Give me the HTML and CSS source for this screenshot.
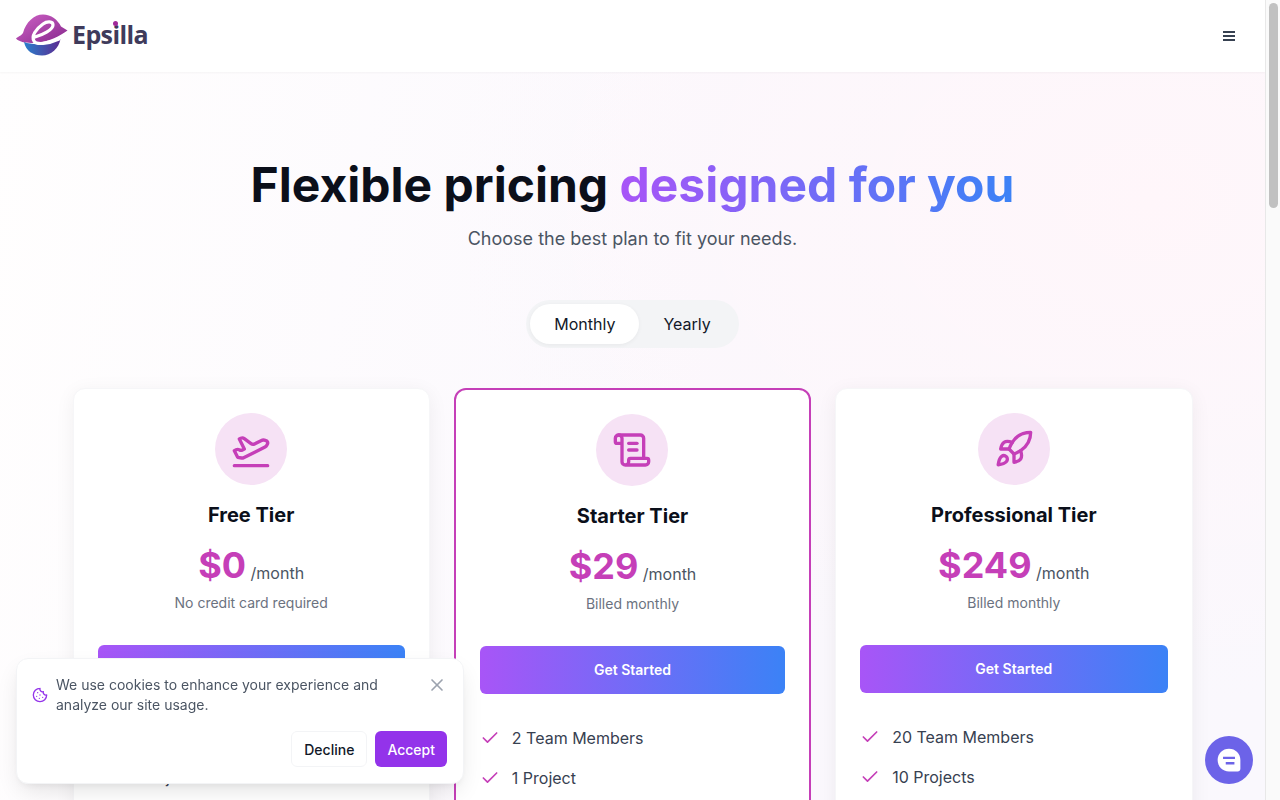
FILE: index.html
```html
<!DOCTYPE html>
<html lang="en">
<head>
    <meta charset="UTF-8">
    <meta name="viewport" content="width=device-width, initial-scale=1.0">
    <title>Epsilla Pricing</title>
    <link rel="stylesheet" href="styles.css">
</head>
<body>
    <div class="page">
        <header class="site-header">
            <a href="#" class="logo">
                <svg class="logo-mark" viewBox="0 0 54 44" width="54" height="44">
                    <defs>
                        <linearGradient id="domeGrad" x1="0" y1="0" x2="1" y2="1">
                            <stop offset="0" stop-color="#cf62c6"/>
                            <stop offset="1" stop-color="#86288c"/>
                        </linearGradient>
                        <linearGradient id="baseGrad" x1="0" y1="0" x2="1" y2="0">
                            <stop offset="0" stop-color="#2a7fcc"/>
                            <stop offset="1" stop-color="#5b2a91"/>
                        </linearGradient>
                    </defs>
                    <path fill="url(#domeGrad)" d="M0 24.500C1 23 5 22 7 19C10 8 18 0.500 27 0.500C35 0.500 42 6 45 12.500L51.500 16.500C44 22 33 27.500 22 28.500C14 29.500 4 29 0 24.500Z"/>
                    <path fill="url(#baseGrad)" d="M8 28C18 32 34 30 44.500 25C43 34 35 41.500 26 41.500C17 41.500 10 37 8 28Z"/>
                    <path fill="none" stroke="#fff" stroke-width="3.200" stroke-linecap="round" d="M19 23C26 21 37 16 37 11C37 7 31 7 27 10C20 15 15 22 18 27C20 31 32 30 43 25"/>
                </svg>
                <span class="logo-text">Eps<span class="logo-i">i</span>lla</span>
            </a>
            <button class="menu-btn" aria-label="Menu">
                <span></span><span></span><span></span>
            </button>
        </header>

        <main class="pricing">
            <h1>Flexible pricing <span class="grad-text">designed for you</span></h1>
            <p class="subtitle">Choose the best plan to fit your needs.</p>

            <div class="toggle">
                <button class="toggle-btn active">Monthly</button>
                <button class="toggle-btn">Yearly</button>
            </div>

            <div class="plans">
                <div class="plan">
                    <div class="plan-icon">
                        <svg class="icon-lg" viewBox="0 0 24 24"><path d="M2 22h20"/><path d="M6.360 17.400 4 17l-2-4 1.100-.550a2 2 0 0 1 1.800 0l.170.100a2 2 0 0 0 1.800 0L8 12 5 6l.900-.450a2 2 0 0 1 2.090.200l4.020 3a2 2 0 0 0 2.100.200l4.190-2.060a2.410 2.410 0 0 1 1.730-.170L21 7a1.400 1.400 0 0 1 .870 1.990l-.380.760c-.230.460-.600.840-1.070 1.080L7.580 17.200a2 2 0 0 1-1.220.180Z"/></svg>
                    </div>
                    <h3>Free Tier</h3>
                    <div class="price"><strong>$0</strong> <span>/month</span></div>
                    <p class="note">No credit card required</p>
                    <a href="#" class="start-btn">Get Started</a>
                    <ul class="features">
                        <li><svg class="check" viewBox="0 0 24 24"><path d="M20 6 9 17l-5-5"/></svg>1 Team Member</li>
                        <li><svg class="check" viewBox="0 0 24 24"><path d="M20 6 9 17l-5-5"/></svg>1 Project</li>
                    </ul>
                </div>

                <div class="plan featured">
                    <div class="plan-icon">
                        <svg class="icon-lg" viewBox="0 0 24 24"><path d="M15 12h-5"/><path d="M15 8h-5"/><path d="M19 17V5a2 2 0 0 0-2-2H4"/><path d="M8 21h12a2 2 0 0 0 2-2v-1a1 1 0 0 0-1-1H11a1 1 0 0 0-1 1v1a2 2 0 1 1-4 0V5a2 2 0 1 0-4 0v2a1 1 0 0 0 1 1h3"/></svg>
                    </div>
                    <h3>Starter Tier</h3>
                    <div class="price"><strong>$29</strong> <span>/month</span></div>
                    <p class="note">Billed monthly</p>
                    <a href="#" class="start-btn">Get Started</a>
                    <ul class="features">
                        <li><svg class="check" viewBox="0 0 24 24"><path d="M20 6 9 17l-5-5"/></svg>2 Team Members</li>
                        <li><svg class="check" viewBox="0 0 24 24"><path d="M20 6 9 17l-5-5"/></svg>1 Project</li>
                    </ul>
                </div>

                <div class="plan">
                    <div class="plan-icon">
                        <svg class="icon-lg" viewBox="0 0 24 24"><path d="M4.500 16.500c-1.500 1.260-2 5-2 5s3.740-.500 5-2c.710-.840.700-2.130-.090-2.910a2.180 2.180 0 0 0-2.910-.090z"/><path d="m12 15-3-3a22 22 0 0 1 2-3.950A12.880 12.880 0 0 1 22 2c0 2.720-.780 7.500-6 11a22.350 22.350 0 0 1-4 2z"/><path d="M9 12H4s.550-3.030 2-4c1.620-1.080 5 0 5 0"/><path d="M12 15v5s3.030-.550 4-2c1.080-1.620 0-5 0-5"/></svg>
                    </div>
                    <h3>Professional Tier</h3>
                    <div class="price"><strong>$249</strong> <span>/month</span></div>
                    <p class="note">Billed monthly</p>
                    <a href="#" class="start-btn">Get Started</a>
                    <ul class="features">
                        <li><svg class="check" viewBox="0 0 24 24"><path d="M20 6 9 17l-5-5"/></svg>20 Team Members</li>
                        <li><svg class="check" viewBox="0 0 24 24"><path d="M20 6 9 17l-5-5"/></svg>10 Projects</li>
                    </ul>
                </div>
            </div>
        </main>
    </div>

    <!-- Cookie notice -->
    <div class="cookie">
        <div class="cookie-top">
            <svg class="cookie-icon" viewBox="0 0 24 24"><path d="M12 2a10 10 0 1 0 10 10 4 4 0 0 1-5-5 4 4 0 0 1-5-5"/><path d="M8.500 8.500v.010"/><path d="M16 15.500v.010"/><path d="M12 12v.010"/><path d="M11 17v.010"/><path d="M7 14v.010"/></svg>
            <p>We use cookies to enhance your experience and analyze our site usage.</p>
            <svg class="cookie-close" viewBox="0 0 24 24"><path d="M18 6 6 18"/><path d="m6 6 12 12"/></svg>
        </div>
        <div class="cookie-actions">
            <button class="decline-btn">Decline</button>
            <button class="accept-btn">Accept</button>
        </div>
    </div>

    <button class="chat-btn" aria-label="Chat">
        <svg viewBox="0 0 24 24" width="26" height="26">
            <path fill="#fff" d="M12 1.500C6 1.500 1.500 6 1.500 12S6 22.500 12 22.500H20C21.500 22.500 22.500 21.500 22.500 20V12C22.500 6 18 1.500 12 1.500Z"/>
            <path stroke="#6c63e8" stroke-width="2.200" d="M6.500 10h11M9 15h8"/>
        </svg>
    </button>

    <!-- Page scrollbar -->
    <div class="scrollbar"><div class="scrollbar-thumb"></div></div>
</body>
</html>
```

FILE: styles.css
```css
html, body {
    height: 100%;
    overflow: hidden;
}

body {
    margin: 0;
    font-family: Inter, "Liberation Sans", sans-serif;
    color: #111827;
    background-color: #fff;
}

button {
    font-family: inherit;
    cursor: pointer;
}

.page {
    width: 1265px;
    height: 800px;
    overflow: hidden;
    background:
        radial-gradient(ellipse 700px 500px at 1150px 200px, #fff6fa 0%, rgba(255, 246, 250, 0) 100%),
        linear-gradient(100deg, #fffefe 0%, #fbf8fd 55%, #faf8fd 100%);
}

.site-header {
    height: 72px;
    display: flex;
    align-items: center;
    justify-content: space-between;
    padding: 0 30px 0 16px;
    background-color: #fff;
    box-shadow: 0 1px 2px rgba(0, 0, 0, 0.04);
}

.logo {
    display: flex;
    align-items: center;
    gap: 2px;
    text-decoration: none;
}

.logo-mark {
    display: block;
    margin-top: -1px;
}

.logo-text {
    margin-top: -4px;
    font-family: "Open Sans", sans-serif;
    font-size: 25px;
    font-weight: 700;
    letter-spacing: -0.6px;
    color: #3f3b5b;
}

.logo-i {
    position: relative;
}

.logo-i::after {
    content: "";
    position: absolute;
    left: 1px;
    top: 4px;
    width: 5px;
    height: 5px;
    border-radius: 50%;
    background-color: #a1299a;
}

.menu-btn {
    display: flex;
    flex-direction: column;
    gap: 2px;
    padding: 0;
    border: 0;
    background: none;
}

.menu-btn span {
    display: block;
    width: 12px;
    height: 2px;
    background-color: #374151;
}

.pricing {
    padding-top: 89px;
    text-align: center;
}

h1 {
    margin: 0;
    font-size: 48px;
    line-height: 48px;
    font-weight: 700;
    color: #0b0f1a;
}

.grad-text {
    background: linear-gradient(90deg, #a855f7, #3b82f6);
    -webkit-background-clip: text;
    background-clip: text;
    color: transparent;
}

.subtitle {
    margin: 16px 0 47px;
    font-size: 18px;
    line-height: 28px;
    color: #4b5563;
}

.toggle {
    display: inline-flex;
    padding: 4px;
    border-radius: 24px;
    background-color: #f3f4f6;
    vertical-align: top;
}

.toggle-btn {
    height: 40px;
    padding: 0 24px;
    border: 0;
    border-radius: 20px;
    background: none;
    font-size: 16px;
    font-weight: 400;
    color: #111827;
}

.toggle-btn.active {
    background-color: #fff;
    box-shadow: 0 1px 4px rgba(0, 0, 0, 0.05);
}

.plans {
    display: grid;
    grid-template-columns: repeat(3, 1fr);
    gap: 24px;
    width: 1120px;
    margin: 40px auto 0;
}

.plan {
    min-height: 560px;
    padding: 24px;
    border: 1px solid #f6f6f8;
    border-radius: 12px;
    background-color: #fff;
    box-shadow: 0 4px 20px rgba(0, 0, 0, 0.06);
}

.plan.featured {
    border: 2px solid #c53fb8;
    box-shadow: none;
}

.plan-icon {
    width: 72px;
    height: 72px;
    margin: 0 auto 16px;
    display: flex;
    align-items: center;
    justify-content: center;
    border-radius: 50%;
    background-color: #f6e2f5;
}

.icon-lg {
    width: 40px;
    height: 40px;
    fill: none;
    stroke: #c53fb8;
    stroke-width: 2;
    stroke-linecap: round;
    stroke-linejoin: round;
}

h3 {
    margin: 0 0 16px;
    font-size: 20px;
    line-height: 28px;
    font-weight: 700;
    color: #0b0f1a;
}

.price {
    line-height: 40px;
    font-size: 16px;
    color: #4b5563;
}

.price span {
    position: relative;
    top: 1px;
}

.price strong {
    font-size: 36px;
    font-weight: 700;
    color: #c53fb8;
}

.note {
    margin: 1px 0 32px;
    font-size: 14px;
    line-height: 20px;
    color: #6b7280;
}

.start-btn {
    display: block;
    height: 48px;
    line-height: 48px;
    border-radius: 6px;
    background: linear-gradient(90deg, #a855f7, #3b82f6);
    color: #fff;
    font-size: 14px;
    font-weight: 600;
    text-decoration: none;
}

.features {
    list-style: none;
    margin: 32px 0 0;
    padding: 0;
    text-align: left;
}

.features li {
    display: flex;
    align-items: center;
    gap: 12px;
    margin-bottom: 16px;
    font-size: 16px;
    line-height: 24px;
    color: #374151;
}

.check {
    width: 20px;
    height: 20px;
    flex-shrink: 0;
    fill: none;
    stroke: #c53fb8;
    stroke-width: 2;
    stroke-linecap: round;
    stroke-linejoin: round;
}

.cookie {
    position: fixed;
    left: 16px;
    bottom: 16px;
    width: 448px;
    box-sizing: border-box;
    padding: 16px 16px 16px 15px;
    border: 1px solid #f3f4f6;
    border-radius: 12px;
    background-color: #fff;
    box-shadow: 0 10px 25px -5px rgba(0, 0, 0, 0.12), 0 4px 10px -4px rgba(0, 0, 0, 0.08);
}

.cookie-top {
    display: flex;
    align-items: center;
    gap: 8px;
}

.cookie-top p {
    flex: 1;
    margin: 0;
    font-size: 14px;
    line-height: 20px;
    color: #4b5563;
}

.cookie-icon {
    width: 16px;
    height: 16px;
    flex-shrink: 0;
    fill: none;
    stroke: #9333ea;
    stroke-width: 2;
    stroke-linecap: round;
    stroke-linejoin: round;
}

.cookie-close {
    align-self: flex-start;
    width: 20px;
    height: 20px;
    margin-left: 20px;
    flex-shrink: 0;
    fill: none;
    stroke: #9ca3af;
    stroke-width: 2;
    stroke-linecap: round;
}

.cookie-actions {
    display: flex;
    justify-content: flex-end;
    gap: 8px;
    margin-top: 16px;
}

.decline-btn,
.accept-btn {
    height: 36px;
    padding: 0 12px;
    border-radius: 6px;
    font-size: 14px;
    font-weight: 500;
}

.decline-btn {
    border: 1px solid #f3f4f6;
    background-color: #fff;
    color: #111827;
}

.accept-btn {
    border: 0;
    background-color: #9333ea;
    color: #fff;
}

.chat-btn {
    position: fixed;
    left: 1205px;
    top: 736px;
    width: 48px;
    height: 48px;
    display: flex;
    align-items: center;
    justify-content: center;
    padding: 0;
    border: 0;
    border-radius: 50%;
    background-color: #6c63e8;
}

.scrollbar {
    position: fixed;
    top: 0;
    right: 0;
    bottom: 0;
    width: 15px;
    box-sizing: border-box;
    padding: 3px 2.5px 0 3px;
    border-left: 1px solid #e8e8e8;
    background-color: #fafafa;
}

.scrollbar-thumb {
    height: 205px;
    border-radius: 5px;
    background-color: #c1c1c1;
}
```
